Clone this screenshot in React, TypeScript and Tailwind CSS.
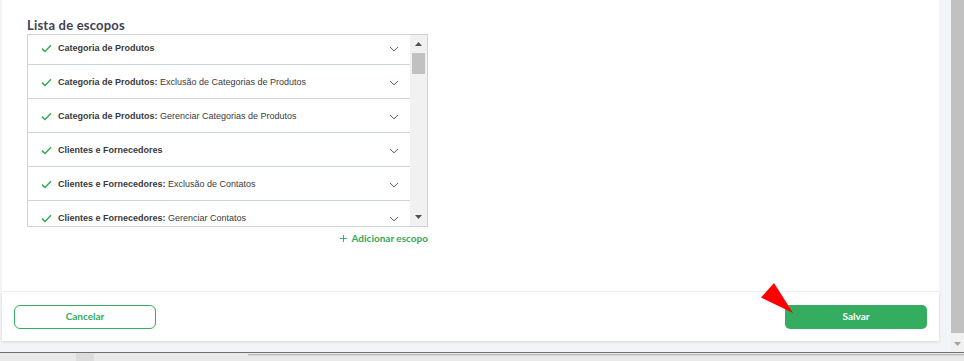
import { Plus } from 'lucide-react';

const scopes = [
  { group: 'Categoria de Produtos', detail: '' },
  { group: 'Categoria de Produtos', detail: 'Exclusão de Categorias de Produtos' },
  { group: 'Categoria de Produtos', detail: 'Gerenciar Categorias de Produtos' },
  { group: 'Clientes e Fornecedores', detail: '' },
  { group: 'Clientes e Fornecedores', detail: 'Exclusão de Contatos' },
  { group: 'Clientes e Fornecedores', detail: 'Gerenciar Contatos' },
];

function Check() {
  return (
    <svg width="11" height="9" viewBox="0 0 11 9" className="shrink-0">
      <path d="M1 4.6 L4 7.5 L10 1.2" fill="none" stroke="#34a95c" strokeWidth="1.5" />
    </svg>
  );
}

function Chevron() {
  return (
    <svg width="10" height="6" viewBox="0 0 10 6" className="shrink-0">
      <path d="M1 1 L5 4.8 L9 1" fill="none" stroke="#555a66" strokeWidth="1" />
    </svg>
  );
}

function Triangle({ down }: { down?: boolean }) {
  return (
    <svg width="7" height="4" viewBox="0 0 7 4">
      <path d={down ? 'M0 0 L7 0 L3.5 4 Z' : 'M0 4 L7 4 L3.5 0 Z'} fill="#505050" />
    </svg>
  );
}

export default function App() {
  return (
    <div className="relative w-[964px] h-[361px] overflow-hidden bg-[#f3f4f7] flex flex-col" style={{ fontFamily: 'Lato, sans-serif' }}>
      <div className="flex h-[352px]">
        {/* page content */}
        <div className="flex-1 flex flex-col pl-[2px] pr-[12px]">
          <div className="bg-white h-[291px] pl-[25px] pt-[16px]">
            <h2 className="text-[13px] font-bold text-[#404253] leading-[18px] tracking-[0.2px]">Lista de escopos</h2>
            <div className="w-[401px] h-[193px] border border-[#cdd3de] flex">
              <div className="flex-1 overflow-hidden">
                <div className="-mt-[4px]">
                  {scopes.map((s, i) => (
                    <div key={i} className="h-[34px] border-b border-[#cdd3de] flex items-center pl-[13px] pr-[11px] pt-[2px]" style={{ fontFamily: '"Liberation Sans", Arial, sans-serif' }}>
                      <Check />
                      <span className="ml-[6px] flex-1 text-[9px] text-[#3a3a3a] whitespace-nowrap">
                        <span className="font-bold">{s.group}{s.detail ? ':' : ''}</span>
                        {s.detail ? ' ' + s.detail : ''}
                      </span>
                      <Chevron />
                    </div>
                  ))}
                </div>
              </div>
              {/* list scrollbar */}
              <div className="w-[17px] bg-[#f1f1f1] flex flex-col items-center">
                <div className="h-[17px] flex items-center justify-center pt-[1px]"><Triangle /></div>
                <div className="mt-[1px] w-[13px] h-[21px] bg-[#c1c1c1]" />
                <div className="flex-1" />
                <div className="h-[17px] flex items-center justify-center pb-[2px]"><Triangle down /></div>
              </div>
            </div>
            <div className="w-[401px] flex justify-end mt-[4px]">
              <button className="flex items-center gap-[3px] text-[10px] font-bold text-[#34a95c] leading-[14px]">
                <Plus size={11} strokeWidth={2} />
                Adicionar escopo
              </button>
            </div>
          </div>
          <div className="mt-[1px] h-[49px] bg-white shadow-[0_1px_3px_rgba(0,0,0,0.12)] flex items-center justify-between pl-[12px] pr-[12px]">
            <button className="w-[142px] h-[24px] rounded-[6px] border-[1.5px] border-[#34ad60] text-[#34ad60] text-[10px] font-bold">Cancelar</button>
            <button className="w-[142px] h-[24px] rounded-[5px] bg-[#34ad60] text-white text-[10px] font-bold">Salvar</button>
          </div>
        </div>
        {/* page scrollbar */}
        <div className="w-[13px] flex flex-col">
          <div className="h-[333px] bg-[#c1c1c1]" />
          <div className="flex-1 bg-[#f1f1f1] flex items-center justify-center pt-[2px]">
            <svg width="7" height="4" viewBox="0 0 7 4"><path d="M0 0 L7 0 L3.5 4 Z" fill="#a3a3a3" /></svg>
          </div>
        </div>
      </div>
      {/* bottom strip */}
      <div className="flex-1 border-t border-[#6f6f6f] bg-[#e9e9ea] flex">
        <div className="w-[76px]" />
        <div className="w-[18px] bg-[#dcdcdc]" />
        <div className="w-[154px]" />
        <div className="flex-1 mt-[1px] h-[2px] border-t border-[#b9b9b9] bg-[#d6d6d6]" />
      </div>
      {/* red pointer annotation */}
      <svg className="absolute left-[758px] top-[280px]" width="40" height="36" viewBox="0 0 40 36">
        <polygon points="16,3 3,17.5 35,33" fill="#ff0000" />
      </svg>
    </div>
  );
}
